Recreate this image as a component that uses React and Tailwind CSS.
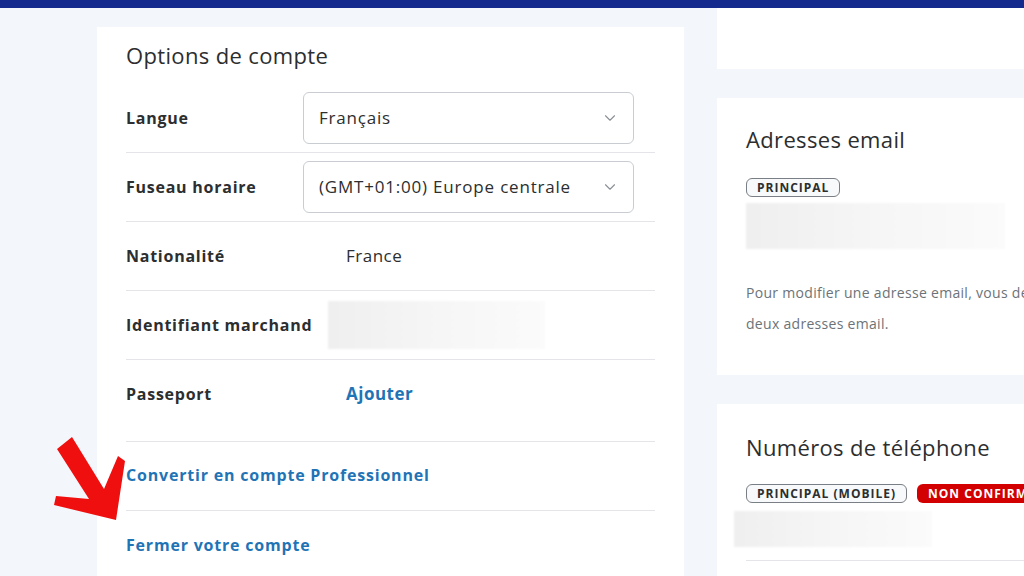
import { ChevronDown } from 'lucide-react';

const font = { fontFamily: '"Open Sans", "Noto Sans", sans-serif' };

const Select = ({ value }) => (
  <div className="flex h-[52px] w-[331px] items-center justify-between rounded-md border border-[#c9cdd2] bg-white pl-[15px] pr-[14px] text-[17px] tracking-[0.8px] text-[#2c2e2f]">
    <span>{value}</span>
    <ChevronDown size={18} strokeWidth={1.5} className="text-[#8a9096]" />
  </div>
);

const Row = ({ label, children, tall }) => (
  <div className={`flex items-center border-b border-[#e3e5e8] ${tall ? 'h-[82px] pb-[14px]' : 'h-[69px]'}`}>
    <div className="w-[177px] shrink-0 whitespace-nowrap text-[16px] font-bold tracking-[0.75px] text-[#2c2e2f]">{label}</div>
    {children}
  </div>
);

const Blur = ({ className }) => (
  <div className={`bg-gradient-to-r from-[#efefef] via-[#f6f6f6] to-[#fbfbfb] blur-[1px] ${className}`} />
);

const Badge = ({ children, red }) => (
  <span
    className={
      red
        ? 'inline-flex h-[19px] items-center rounded-md bg-[#d20000] px-[11px] text-[12px] font-bold tracking-[1px] text-white'
        : 'inline-flex h-[19px] items-center rounded-md border border-[#7a7f85] bg-[#f7f9fb] px-[10px] text-[12px] font-bold tracking-[1px] text-[#2c2e2f]'
    }
  >
    {children}
  </span>
);

const Arrow = () => (
  <svg className="pointer-events-none absolute left-0 top-0" width="140" height="576" viewBox="0 0 140 576">
    <polygon
      points="57,449 72,437 104,489 118,456 125,461 116,520 54,505 56,496 89,499"
      fill="#f00f0f"
    />
  </svg>
);

export default function App() {
  return (
    <div className="relative h-[576px] w-[1024px] overflow-hidden bg-[#f3f6fa]" style={font}>
      <div className="h-2 bg-[#142a8c]" />
      <div className="flex gap-[33px] pl-[97px]">
        {/* Options de compte */}
        <div className="mt-[19px] h-[600px] w-[587px] shrink-0 bg-white pl-[29px] pr-[29px] pt-[13px]">
          <h2 className="text-[22px] leading-[30px] tracking-[0.35px] text-[#2c2e2f]">Options de compte</h2>
          <div className="mt-[14px]">
            <Row label="Langue">
              <Select value="Français" />
            </Row>
            <Row label="Fuseau horaire">
              <Select value="(GMT+01:00) Europe centrale" />
            </Row>
            <Row label="Nationalité">
              <span className="ml-[43px] text-[17px] tracking-[0.5px] text-[#2c2e2f]">France</span>
            </Row>
            <Row label="Identifiant marchand">
              <Blur className="ml-[25px] h-[48px] w-[217px]" />
            </Row>
            <Row label="Passeport" tall>
              <span className="ml-[43px] text-[17px] font-bold tracking-[0.5px] text-[#1f74b6]">Ajouter</span>
            </Row>
            <div className="flex h-[69px] items-center border-b border-[#e3e5e8] pb-[2px] text-[16px] font-bold tracking-[0.8px] text-[#1f74b6]">
              Convertir en compte Professionnel
            </div>
            <div className="flex h-[67px] items-center text-[16px] font-bold tracking-[0.8px] text-[#1f74b6]">
              Fermer votre compte
            </div>
          </div>
        </div>

        {/* Right column */}
        <div className="flex min-w-0 flex-1 flex-col gap-[29px]">
          <div className="h-[61px] bg-white" />
          <div className="h-[277px] bg-white pl-[29px] pt-[26px]">
            <h2 className="text-[22px] leading-[30px] tracking-[0.35px] text-[#2c2e2f]">Adresses email</h2>
            <div className="mt-[24px] flex">
              <Badge>PRINCIPAL</Badge>
            </div>
            <Blur className="mt-[6px] h-[46px] w-[259px]" />
            <p className="mt-[28px] whitespace-nowrap text-[14px] leading-[31px] tracking-[0.3px] text-[#6c7378]">
              Pour modifier une adresse email, vous devez disposer d'au moins
              <br />
              deux adresses email.
            </p>
          </div>
          <div className="h-[200px] bg-white pl-[29px] pt-[28px]">
            <h2 className="text-[22px] leading-[30px] tracking-[0.35px] text-[#2c2e2f]">Numéros de téléphone</h2>
            <div className="mt-[22px] flex gap-[10px] whitespace-nowrap">
              <Badge>PRINCIPAL (MOBILE)</Badge>
              <Badge red>NON CONFIRMÉ</Badge>
            </div>
            <Blur className="-ml-[12px] mt-[8px] h-[36px] w-[198px]" />
            <div className="mt-[13px] border-t border-[#e3e5e8]" />
          </div>
        </div>
      </div>
      <Arrow />
    </div>
  );
}
